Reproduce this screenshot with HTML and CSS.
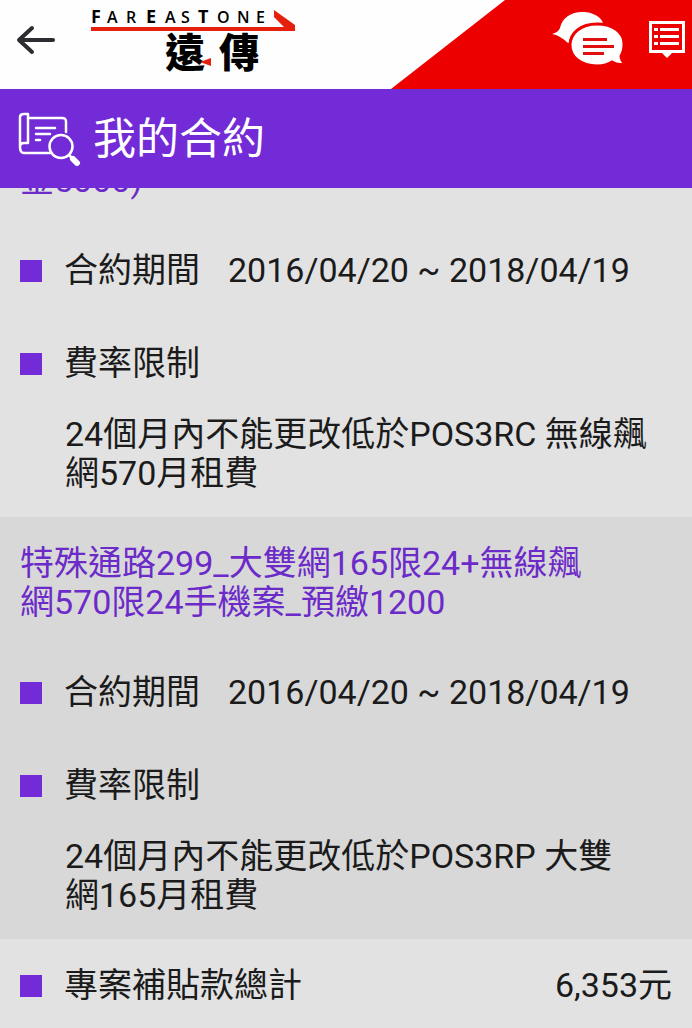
FILE: index.html
```html
<!DOCTYPE html>
<html lang="zh-Hant">
<head>
<meta charset="utf-8">
<meta name="viewport" content="width=device-width, initial-scale=1">
<title>我的合約</title>
<link rel="stylesheet" href="styles.css">
</head>
<body>
<header class="topbar">
  <button class="icon-button back" type="button" aria-label="返回">
    <svg width="40" height="32" viewBox="0 0 40 32" fill="none" stroke="#2e2c30" stroke-width="4" stroke-linecap="round" stroke-linejoin="round"><path d="M37 16H4M16 4L3 16l13 12"/></svg>
  </button>
  <svg class="logo" width="208" height="88" viewBox="0 0 208 88" role="img" aria-label="FAREASTONE 遠傳">
    <text class="logo-latin" y="23"><tspan class="logo-cap" x="0">F</tspan><tspan x="16 35">AR</tspan><tspan class="logo-cap" x="55">E</tspan><tspan x="74 90">AS</tspan><tspan class="logo-cap" x="107">T</tspan><tspan x="126 146 165">ONE</tspan></text>
    <path fill="#e5200d" d="M0 27H193L183 17V10L204 25V31H0z"/>
    <text class="logo-cjk" x="74 128" y="67">遠傳</text>
    <path fill="#e5200d" d="M109 62l11-4v8z"/>
  </svg>
  <nav class="actions" aria-label="快捷功能">
    <button class="icon-button" type="button" aria-label="線上客服">
      <svg width="74" height="56" viewBox="0 0 74 56">
        <path fill="#fff" d="M0 24c4-1 7-3 8-6C10 8 19 2 30 2c12 0 22 6 22 16 0 9-10 16-22 16-4 0-7-1-11-2l-3 1C12 30 9 26 0 24z"/>
        <path fill="#fff" stroke="#ec0000" stroke-width="3" d="M45 14c16 0 27 8 27 20 0 5-1 9-3 12 0 4 2 6 4 8-5 1-10 0-13-2-4 3-9 4-15 4-16 0-27-9-27-21s11-21 27-21z"/>
        <path fill="none" stroke="#e00e0e" stroke-width="3" d="M31 29.500h24M31 36.500h31M31 43.500h21"/>
      </svg>
    </button>
    <button class="icon-button" type="button" aria-label="訊息列表">
      <svg width="38" height="38" viewBox="0 0 38 38">
        <path fill="#fff" fill-rule="evenodd" d="M1 1h36v32H24l-5 5-5-5H1zM4 4v26h30V4z"/>
        <path stroke="#fff" stroke-width="3" d="M6 9.500h4M12 9.500h19M6 16.500h4M12 16.500h19M6 23.500h4M12 23.500h19"/>
      </svg>
    </button>
  </nav>
</header>
<div class="page-title">
  <svg width="64" height="56" viewBox="0 0 64 56" fill="none" stroke="#fff" stroke-width="2.500" stroke-linecap="round" stroke-linejoin="round">
    <path d="M10 3V32H6c-3 0-4 2-4 4V6c0-2 1-3 4-3h4M10 7H44c3 0 4 1 4 4V21M2 36c0 4 1 6 4 6H32M18 17H37M18 23H32M18 29H22"/>
    <circle cx="43" cy="35.500" r="11.500"/>
    <path stroke-width="6" d="M55 48l4 4"/>
    <path d="M51 44l4 4"/>
  </svg>
  <h1>我的合約</h1>
</div>
<main>
  <section class="contract scrolled">
    <h2>金5000)</h2>
    <dl>
      <div class="row"><dt>合約期間</dt><dd>2016/04/20 ~ 2018/04/19</dd></div>
      <div class="row limit"><dt>費率限制</dt><dd>24個月內不能更改低於POS3RC 無線飆網570月租費</dd></div>
    </dl>
  </section>
  <section class="contract alternate">
    <h2>特殊通路299_大雙網165限24+無線飆網570限24手機案_預繳1200</h2>
    <dl>
      <div class="row"><dt>合約期間</dt><dd>2016/04/20 ~ 2018/04/19</dd></div>
      <div class="row limit"><dt>費率限制</dt><dd>24個月內不能更改低於POS3RP 大雙<span class="keep">網165月租費</span></dd></div>
    </dl>
  </section>
  <dl class="total">
    <div class="row"><dt>專案補貼款總計</dt><dd>6,353元</dd></div>
  </dl>
</main>
</body>
</html>
```
FILE: styles.css
```css
* {
  box-sizing: border-box;
}

body {
  margin: 0;
  background: #e2e2e2;
  color: #1b1b1b;
  font-family: Roboto, "Noto Sans CJK TC", sans-serif;
  font-size: 34px;
  line-height: 39px;
}

h1, h2, dl, dd {
  margin: 0;
  font-weight: 400;
}

.icon-button {
  display: flex;
  padding: 0;
  border: 0;
  background: none;
  cursor: pointer;
}

.topbar {
  display: flex;
  height: 89px;
  background: #fefefe;
}

.back {
  align-self: flex-start;
  margin: 24px 35px 0 16px;
}

.logo {
  flex: none;
}

.logo-latin {
  font-family: "Open Sans", sans-serif;
  font-size: 16px;
  font-weight: 600;
}

.logo-cap {
  font-size: 18px;
  font-weight: 700;
}

.logo-cjk {
  font-family: "Noto Sans CJK TC", sans-serif;
  font-size: 40px;
  font-weight: 900;
}

.actions {
  display: flex;
  gap: 22px;
  align-items: flex-start;
  justify-content: flex-end;
  width: 301px;
  margin-left: auto;
  padding: 10px 6px 0 0;
  background: #ec0000;
  clip-path: polygon(114px 0, 100% 0, 100% 100%, 0 100%);
}

.actions .icon-button + .icon-button {
  margin-top: 10px;
}

.page-title {
  position: relative;
  z-index: 1;
  display: flex;
  gap: 11px;
  align-items: center;
  height: 99px;
  padding: 0 18px;
  background: #722bd6;
  color: #fff;
}

.page-title h1 {
  font-size: 43px;
  line-height: 52px;
}

.contract {
  padding: 27px 20px 24px;
}

.contract h2 {
  max-width: 580px;
  margin-bottom: 51px;
  color: #6c2bc8;
  font-size: 34px;
}

.scrolled {
  margin-top: -54px;
}

.alternate {
  background: #d8d8d8;
}

.row {
  display: flex;
  gap: 28px;
}

.row dt {
  display: flex;
  gap: 22px;
  align-items: center;
}

.row dt::before {
  width: 22px;
  height: 22px;
  background: #722bd6;
  content: "";
}

.limit {
  flex-direction: column;
  gap: 32px;
  margin-top: 54px;
}

.limit dd {
  padding-left: 45px;
}

.keep {
  white-space: nowrap;
}

.total {
  padding: 27px 20px 24px;
}

.total .row {
  justify-content: space-between;
}
```
